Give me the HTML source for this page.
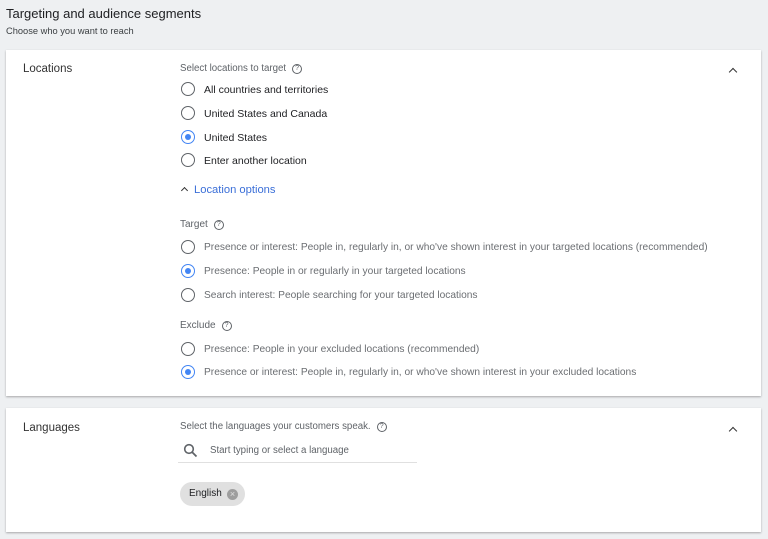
<!DOCTYPE html>
<html><head><style>
body{margin:0;width:768px;height:539px;background:#eef0f2;font-family:"Liberation Sans",sans-serif;position:relative;overflow:hidden;color:#202124}
.a{position:absolute;white-space:nowrap}
.card{position:absolute;left:6px;width:755px;background:#fff;box-shadow:0 1px 2px rgba(0,0,0,.3)}
.r{position:absolute;left:182px;width:12px;height:12px;border:1.7px solid #5f6368;border-radius:50%;margin-top:-1px;margin-left:-1px}
.r.on{border-color:#4285f4}
.r.on::after{content:"";position:absolute;left:3px;top:3px;width:6px;height:6px;border-radius:50%;background:#4285f4}
.t{font-size:10.5px;color:#202124;left:204px}
.g{color:#5f6368}
.t.g{font-size:10.2px;color:#6b6e72}
.q{display:inline-block;width:8px;height:8px;border:1.2px solid #5f6368;border-radius:50%;font-size:7px;line-height:8px;text-align:center;color:#5f6368;margin-left:6px;vertical-align:1px}
.chev{position:absolute;left:730px;width:5px;height:5px;border-left:1.8px solid #333;border-top:1.8px solid #333;transform:rotate(45deg)}
</style></head><body>
<div class="a" style="left:6px;top:6px;font-size:13px">Targeting and audience segments</div>
<div class="a" style="left:6px;top:26px;font-size:9.3px;color:#3c4043">Choose who you want to reach</div>
<div class="card" style="top:50px;height:346px"></div>
<div class="card" style="top:408px;height:124px"></div>
<div class="a" style="left:23px;top:63px;font-size:11.5px;color:#333">Locations</div>
<div class="a g" style="left:180px;top:63px;font-size:9.7px">Select locations to target<span class="q">?</span></div>
<div class="chev" style="top:69px"></div>
<div class="r" style="top:83px"></div><div class="a t" style="top:84px">All countries and territories</div>
<div class="r" style="top:107px"></div><div class="a t" style="top:108px">United States and Canada</div>
<div class="r on" style="top:131px"></div><div class="a t" style="top:132px">United States</div>
<div class="r" style="top:154px"></div><div class="a t" style="top:155px">Enter another location</div>
<div class="a" style="left:182px;top:188px;width:4px;height:4px;border-left:1.5px solid #333;border-top:1.5px solid #333;transform:rotate(45deg)"></div>
<div class="a" style="left:194px;top:184px;font-size:11.2px;color:#3b6fd8">Location options</div>
<div class="a g" style="left:180px;top:219px;font-size:10px">Target<span class="q">?</span></div>
<div class="r" style="top:241px"></div><div class="a t g" style="top:242px">Presence or interest: People in, regularly in, or who've shown interest in your targeted locations (recommended)</div>
<div class="r on" style="top:265px"></div><div class="a t g" style="top:266px">Presence: People in or regularly in your targeted locations</div>
<div class="r" style="top:289px"></div><div class="a t g" style="top:290px">Search interest: People searching for your targeted locations</div>
<div class="a g" style="left:180px;top:320px;font-size:10px">Exclude<span class="q">?</span></div>
<div class="r" style="top:343px"></div><div class="a t g" style="top:344px">Presence: People in your excluded locations (recommended)</div>
<div class="r on" style="top:366px"></div><div class="a t g" style="top:367px">Presence or interest: People in, regularly in, or who've shown interest in your excluded locations</div>
<div class="a" style="left:23px;top:422px;font-size:11.5px;color:#333">Languages</div>
<div class="a g" style="left:180px;top:421px;font-size:9.7px">Select the languages your customers speak.<span class="q">?</span></div>
<div class="chev" style="top:428px"></div>
<svg class="a" style="left:183px;top:443px" width="15" height="15" viewBox="0 0 15 15"><circle cx="6" cy="6" r="4.3" fill="none" stroke="#5f6368" stroke-width="1.6"/><path d="M9 9l4.5 4.5" stroke="#5f6368" stroke-width="1.8"/></svg>
<div class="a g" style="left:210px;top:445px;font-size:9.7px">Start typing or select a language</div>
<div class="a" style="left:178px;top:462px;width:239px;height:1px;background:#e0e0e0"></div>
<div class="a" style="left:180px;top:482px;width:65px;height:24px;border-radius:12px;background:#e0e0e0"></div>
<div class="a" style="left:189px;top:488px;font-size:10px">English</div>
<div class="a" style="left:227px;top:489px;width:11px;height:11px;border-radius:50%;background:#9e9e9e;color:#e0e0e0;font-size:9px;line-height:11px;text-align:center">×</div>
</body></html>
